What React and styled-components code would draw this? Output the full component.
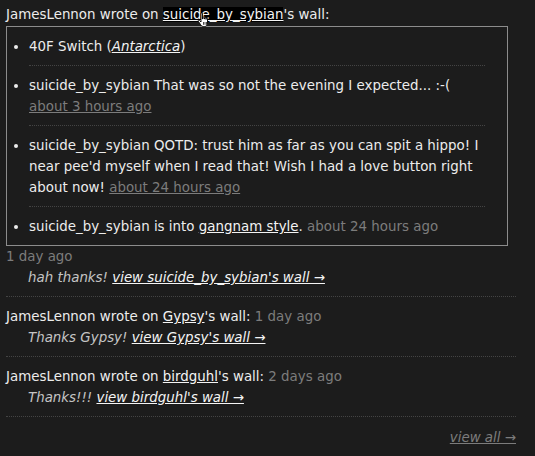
import React from 'react';
import styled, { createGlobalStyle } from 'styled-components';

const GlobalStyle = createGlobalStyle`
  body {
    margin: 0;
    background: #1c1c1c;
    color: #ececec;
    font-family: "DejaVu Sans", Verdana, sans-serif;
    font-size: 13.4px;
    line-height: 21px;
  }
`;

const Page = styled.div`
  padding: 4px 19px 8px 6px;
`;

const Feed = styled.ul`
  list-style: none;
  margin: 0;
  padding: 0;
`;

const FeedItem = styled.li`
  padding: ${p => (p.first ? '0 0 8px' : '9px 0 8px')};
  border-bottom: 1px dotted #444;
`;

const Link = styled.a`
  color: #f4f4f4;
  text-decoration: underline;
  background: ${p => (p.hover ? '#000' : 'transparent')};
  position: relative;
`;

const Muted = styled.span`
  color: #7c7c7c;
`;

const MutedLink = styled.a`
  color: #7c7c7c;
  text-decoration: underline;
`;

const Message = styled.div`
  padding-left: 22px;
  font-style: italic;
  color: #c4c4c4;
`;

const WallBox = styled.div`
  margin: 1px 8px 0 0;
  border: 1px solid #8c8c8c;
`;

const Activity = styled.ul`
  margin: 0;
  padding: 0 22px 0 22px;
  list-style: disc;
`;

const ActivityItem = styled.li`
  padding: 9px 0 8px;
  border-bottom: ${p => (p.last ? 'none' : '1px dotted #444')};
`;

const Footer = styled.div`
  margin-top: 10px;
  text-align: right;
  font-style: italic;
`;

const Cursor = styled.svg`
  position: absolute;
  left: 34px;
  top: 5px;
  pointer-events: none;
`;

const Hand = () => (
  <Cursor width="14" height="16" viewBox="0 0 14 16">
    <path
      d="M4 1.5c0-.8 1.5-.8 1.5 0V7h.3V5.5c0-.8 1.4-.8 1.4 0V7h.3V6c0-.8 1.4-.8 1.4 0v1.3h.3v-.6c0-.8 1.3-.8 1.3 0V11c0 2-1 3.5-3 3.5H6.4C5 14.5 4.3 13.6 3.5 12.5L1.3 9.3c-.5-.7.4-1.5 1.1-.9L4 10V1.5z"
      fill="#fff"
      stroke="#000"
      strokeWidth="0.9"
    />
    <path d="M6.5 10v2.8M8 10v2.8M9.5 10v2.8" stroke="#000" strokeWidth="0.7" />
  </Cursor>
);

export default function App() {
  return (
    <>
      <GlobalStyle />
      <Page>
        <Feed>
          <FeedItem first>
            JamesLennon wrote on{' '}
            <Link hover>
              suicide_by_sybian
              <Hand />
            </Link>
            's wall:
            <WallBox>
              <Activity>
                <ActivityItem>
                  40F Switch (<Link><i>Antarctica</i></Link>)
                </ActivityItem>
                <ActivityItem>
                  suicide_by_sybian That was so not the evening I expected... :-(
                  <br />
                  <MutedLink>about 3 hours ago</MutedLink>
                </ActivityItem>
                <ActivityItem>
                  suicide_by_sybian QOTD: trust him as far as you can spit a hippo! I near pee'd
                  myself when I read that! Wish I had a love button right about now!{' '}
                  <MutedLink>about 24 hours ago</MutedLink>
                </ActivityItem>
                <ActivityItem last>
                  suicide_by_sybian is into <Link>gangnam style</Link>.{' '}
                  <Muted>about 24 hours ago</Muted>
                </ActivityItem>
              </Activity>
            </WallBox>
            <Muted>1 day ago</Muted>
            <Message>
              hah thanks! <Link>view suicide_by_sybian's wall →</Link>
            </Message>
          </FeedItem>
          <FeedItem>
            JamesLennon wrote on <Link>Gypsy</Link>'s wall: <Muted>1 day ago</Muted>
            <Message>
              Thanks Gypsy! <Link>view Gypsy's wall →</Link>
            </Message>
          </FeedItem>
          <FeedItem>
            JamesLennon wrote on <Link>birdguhl</Link>'s wall: <Muted>2 days ago</Muted>
            <Message>
              Thanks!!! <Link>view birdguhl's wall →</Link>
            </Message>
          </FeedItem>
        </Feed>
        <Footer>
          <MutedLink>view all →</MutedLink>
        </Footer>
      </Page>
    </>
  );
}
